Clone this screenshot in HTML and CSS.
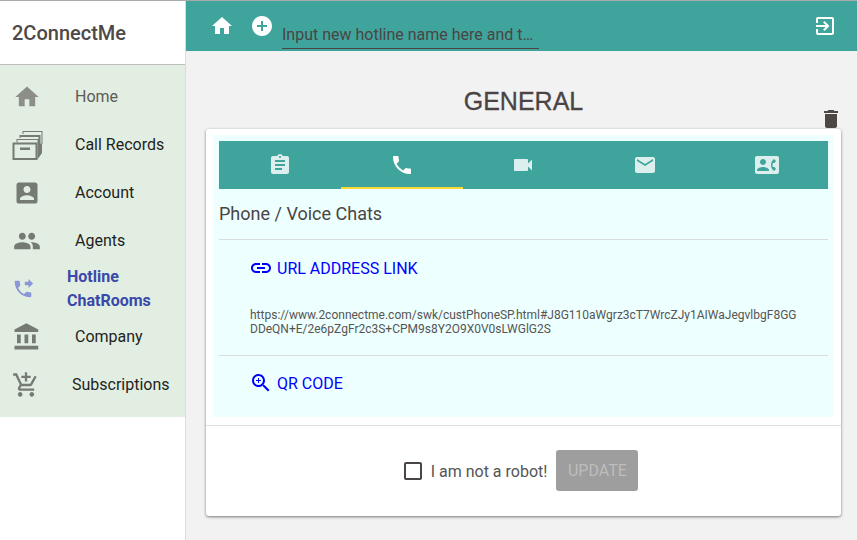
FILE: index.html
```html
<!DOCTYPE html>
<html lang="en">
<head>
<meta charset="utf-8">
<title>2ConnectMe</title>
<link rel="stylesheet" href="styles.css">
</head>
<body>
<div class="app">
  <aside class="sidebar">
    <header class="brand">2ConnectMe</header>
    <nav class="nav">
      <a class="nav-row nav-muted"><svg class="nav-icon" viewBox="0 0 24 24"><path d="M10 20v-6h4v6h5v-8h3L12 3 2 12h3v8z"/></svg><span class="nav-label">Home</span></a>
      <a class="nav-row"><svg class="nav-icon nav-icon-records" viewBox="0 0 32 32"><path d="M2.500 14.500h23V30h-23z" fill="none" stroke-width="2" stroke="currentColor"/><path d="M9 18.500h10v2.500H9z"/><path d="M5.500 13.500V10h22v11h-1V11h-20v2.500zM8.500 9V6h21v11h-2V8h-18v1zM11.500 5V2h20v13l-1 1V3h-18v2zM26.500 15.500l4.500-1V24l-4.500 6.500z"/></svg><span class="nav-label">Call Records</span></a>
      <a class="nav-row"><svg class="nav-icon" viewBox="0 0 24 24"><path d="M3 5v14c0 1.100.89 2 2 2h14c1.100 0 2-.9 2-2V5c0-1.100-.9-2-2-2H5c-1.110 0-2 .9-2 2zm12 4c0 1.660-1.340 3-3 3s-3-1.340-3-3 1.340-3 3-3 3 1.340 3 3zm-9 8c0-2 4-3.100 6-3.100s6 1.100 6 3.100v1H6v-1z"/></svg><span class="nav-label">Account</span></a>
      <a class="nav-row"><svg class="nav-icon" viewBox="0 0 24 24"><path d="M16 11c1.660 0 2.990-1.340 2.990-3S17.660 5 16 5c-1.660 0-3 1.340-3 3s1.340 3 3 3zm-8 0c1.660 0 2.990-1.340 2.990-3S9.660 5 8 5C6.340 5 5 6.340 5 8s1.340 3 3 3zm0 2c-2.330 0-7 1.170-7 3.500V19h14v-2.500c0-2.330-4.670-3.500-7-3.500zm8 0c-.29 0-.62.02-.97.05 1.160.84 1.970 1.970 1.970 3.450V19h6v-2.500c0-2.330-4.670-3.500-7-3.500z"/></svg><span class="nav-label">Agents</span></a>
      <a class="nav-row nav-active"><svg class="nav-icon nav-icon-small" viewBox="0 0 24 24"><path d="M18 11l5-5-5-5v3h-4v4h4v3zm2 4.500c-1.250 0-2.450-.2-3.570-.57-.35-.11-.74-.03-1.020.24l-2.200 2.200c-2.830-1.440-5.150-3.750-6.590-6.590l2.200-2.210c.28-.26.36-.65.25-1C8.700 6.450 8.500 5.250 8.500 4c0-.55-.45-1-1-1H4c-.55 0-1 .45-1 1 0 9.390 7.610 17 17 17 .55 0 1-.45 1-1v-3.500c0-.55-.45-1-1-1z"/></svg><span class="nav-label">Hotline<br>ChatRooms</span></a>
      <a class="nav-row"><svg class="nav-icon nav-icon-large" viewBox="0 0 24 24"><path d="M4 10v7h3v-7H4zm6 0v7h3v-7h-3zM2 22h19v-3H2v3zm14-12v7h3v-7h-3zm-4.500-9L2 6v2h19V6l-9.500-5z"/></svg><span class="nav-label">Company</span></a>
      <a class="nav-row nav-sub"><svg class="nav-icon nav-icon-cart" viewBox="0 0 24 24"><path d="M11 9h2V6h3V4h-3V1h-2v3H8v2h3v3zm-4 9c-1.100 0-1.990.9-1.990 2S5.900 22 7 22s2-.9 2-2-.9-2-2-2zm10 0c-1.100 0-1.990.9-1.990 2s.89 2 1.990 2 2-.9 2-2-.9-2-2-2zm-9.830-3.250l.03-.12.9-1.630h7.450c.75 0 1.410-.41 1.750-1.030l3.860-7.010L19.420 4h-.01l-1.100 2-2.760 5H8.530l-.13-.27L6.160 6l-.95-2-.94-2H1v2h2l3.600 7.590-1.350 2.450c-.16.28-.25.61-.25.96 0 1.100.9 2 2 2h12v-2H7.420c-.13 0-.25-.11-.25-.25z"/></svg><span class="nav-label">Subscriptions</span></a>
    </nav>
  </aside>
  <div class="main">
    <div class="topbar">
      <svg class="bar-icon" viewBox="0 0 24 24"><path d="M10 20v-6h4v6h5v-8h3L12 3 2 12h3v8z"/></svg>
      <svg class="bar-icon bar-add" viewBox="0 0 24 24"><path d="M12 2C6.480 2 2 6.480 2 12s4.480 10 10 10 10-4.480 10-10S17.520 2 12 2zm5 11h-4v4h-2v-4H7v-2h4V7h2v4h4v2z"/></svg>
      <input class="hotline-input" type="text" placeholder="Input new hotline name here and type enter">
      <svg class="bar-icon bar-exit" viewBox="0 0 24 24"><path d="M10.090 15.590L11.500 17l5-5-5-5-1.410 1.410L12.670 11H3v2h9.670l-2.580 2.590zM19 3H5c-1.110 0-2 .9-2 2v4h2V5h14v14H5v-4H3v4c0 1.100.89 2 2 2h14c1.100 0 2-.9 2-2V5c0-1.100-.9-2-2-2z"/></svg>
    </div>
    <div class="content">
      <h1 class="title">GENERAL</h1>
      <section class="card">
        <svg class="trash" viewBox="0 0 24 24"><path d="M6 19c0 1.100.9 2 2 2h8c1.100 0 2-.9 2-2V7H6v12zM19 4h-3.500l-1-1h-5l-1 1H5v2h14V4z"/></svg>
        <div class="panel">
          <div class="tabs">
            <div class="tab"><svg viewBox="0 0 24 24"><path d="M19 3h-4.180C14.400 1.840 13.300 1 12 1c-1.300 0-2.400.84-2.820 2H5c-1.100 0-2 .9-2 2v14c0 1.100.9 2 2 2h14c1.100 0 2-.9 2-2V5c0-1.100-.9-2-2-2zm-7 0c.55 0 1 .45 1 1s-.45 1-1 1-1-.45-1-1 .45-1 1-1zm2 14H7v-2h7v2zm3-4H7v-2h10v2zm0-4H7V7h10v2z"/></svg></div>
            <div class="tab tab-active"><svg viewBox="0 0 24 24"><path d="M6.620 10.790c1.440 2.830 3.760 5.140 6.590 6.590l2.200-2.200c.27-.27.67-.36 1.020-.24 1.120.37 2.330.57 3.570.57.55 0 1 .45 1 1V20c0 .55-.45 1-1 1-9.390 0-17-7.610-17-17 0-.55.45-1 1-1h3.500c.55 0 1 .45 1 1 0 1.250.2 2.450.57 3.570.11.35.03.74-.25 1.020l-2.200 2.200z"/></svg></div>
            <div class="tab"><svg viewBox="0 0 24 24"><path d="M17 10.500V7c0-.55-.45-1-1-1H4c-.55 0-1 .45-1 1v10c0 .55.45 1 1 1h12c.55 0 1-.45 1-1v-3.500l4 4v-11l-4 4z"/></svg></div>
            <div class="tab"><svg viewBox="0 0 24 24"><path d="M20 4H4c-1.100 0-1.990.9-1.990 2L2 18c0 1.100.9 2 2 2h16c1.100 0 2-.9 2-2V6c0-1.100-.9-2-2-2zm0 4l-8 5-8-5V6l8 5 8-5v2z"/></svg></div>
            <div class="tab"><svg viewBox="0 0 24 24"><path d="M22 3H2C.9 3 0 3.900 0 5v14c0 1.100.9 2 2 2h20c1.100 0 1.990-.9 1.990-2L24 5c0-1.100-.9-2-2-2zM8 6c1.660 0 3 1.340 3 3s-1.340 3-3 3-3-1.340-3-3 1.340-3 3-3zm6 12H2v-1c0-2 4-3.100 6-3.100s6 1.100 6 3.100v1zm3.850-4h1.640L21 16l-1.990 1.990c-1.310-.98-2.280-2.380-2.730-3.990-.18-.64-.28-1.310-.28-2s.1-1.360.28-2c.45-1.620 1.420-3.010 2.730-3.990L21 8l-1.510 2h-1.640c-.22.63-.35 1.300-.35 2s.13 1.370.35 2z"/></svg></div>
          </div>
          <div class="panel-body">
            <h2 class="section-title">Phone / Voice Chats</h2>
            <div class="block">
              <a class="action"><svg viewBox="0 0 24 24"><path d="M3.900 12c0-1.710 1.390-3.100 3.100-3.100h4V7H7c-2.760 0-5 2.240-5 5s2.240 5 5 5h4v-1.900H7c-1.710 0-3.100-1.390-3.100-3.100zM8 13h8v-2H8v2zm9-6h-4v1.900h4c1.710 0 3.100 1.390 3.100 3.100s-1.390 3.100-3.100 3.100h-4V17h4c2.760 0 5-2.240 5-5s-2.240-5-5-5z"/></svg>URL ADDRESS LINK</a>
              <p class="url">https://www.2connectme.com/swk/custPhoneSP.html#J8G110aWgrz3cT7WrcZJy1AIWaJegvlbgF8GG<br>DDeQN+E/2e6pZgFr2c3S+CPM9s8Y2O9X0V0sLWGlG2S</p>
            </div>
            <div class="block block-qr">
              <a class="action"><svg viewBox="0 0 24 24"><path d="M15.500 14h-.79l-.28-.27C15.410 12.590 16 11.110 16 9.500 16 5.910 13.090 3 9.500 3S3 5.910 3 9.500 5.910 16 9.500 16c1.610 0 3.090-.59 4.230-1.570l.27.28v.79l5 4.990L20.490 19l-4.990-5zm-6 0C7.010 14 5 11.990 5 9.500S7.010 5 9.500 5 14 7.010 14 9.500 11.990 14 9.500 14zm2.500-4h-2v2H9v-2H7V9h2V7h1v2h2v1z"/></svg>QR CODE</a>
            </div>
          </div>
        </div>
        <footer class="card-footer">
          <span class="checkbox"></span>
          <span class="check-label">I am not a robot!</span>
          <button class="update" type="button">UPDATE</button>
        </footer>
      </section>
    </div>
  </div>
</div>
</body>
</html>
```

FILE: styles.css
```css
* { box-sizing: border-box; }
html, body { margin: 0; padding: 0; height: 100%; overflow: hidden; }
body { font-family: Roboto, "Liberation Sans", sans-serif; color: #4a4444; background: #fff; }
.app { display: flex; height: 540px; border-top: 1px solid #aaa; }

.sidebar { width: 186px; flex: none; background: #fff; border-right: 1px solid #dcdcdc; }
.brand { height: 64px; display: flex; align-items: center; padding-left: 12px; padding-top: 1px; font-size: 20px; font-weight: 500; color: #4f4848; border-bottom: 1px solid #bdbdbd; }
.nav { background: #e2eee1; padding: 8px 0; }
.nav-row { display: flex; align-items: center; height: 48px; color: #1f1f1f; font-size: 16px; line-height: 24px; position: relative; padding-left: 75px; }
.nav-icon { position: absolute; left: 13px; top: 10px; width: 28px; height: 28px; fill: #757b73; color: #757b73; }
.nav-icon-records { width: 32px; height: 32px; left: 11px; top: 8px; }
.nav-icon-small { width: 22px; height: 22px; left: 12px; top: 13px; fill: #8a97d6; }
.nav-icon-large { width: 30px; height: 30px; left: 12px; top: 9px; }
.nav-icon-cart { left: 12px; }
.nav-muted { color: #5e5a58; }
.nav-muted .nav-icon { fill: #8e8e89; }
.nav-active { color: #3949ab; font-weight: 700; padding-left: 67px; }
.nav-sub { padding-left: 72px; }

.main { flex: 1; min-width: 0; background: #f2f2f2; }
.topbar { height: 50px; background: #3fa59c; display: flex; align-items: flex-start; padding-left: 24px; }
.bar-icon { width: 24px; height: 24px; fill: #fff; flex: none; margin-top: 13px; }
.bar-add { margin-left: 16px; }
.bar-exit { margin-left: auto; margin-right: 20px; }
.hotline-input { width: 257px; height: 32px; margin: 16px 0 0 8px; padding: 4px 5px 0 0; background: transparent; border: 0; border-bottom: 1px solid #4a4444; outline: 0; font: 16px Roboto, sans-serif; color: #4a4444; text-overflow: ellipsis; }
.hotline-input::placeholder { color: #4a4444; opacity: 1; }

.content { padding: 0 16px 0 20px; }
.title { margin: 0; height: 78px; padding-top: 35px; text-align: center; font: 400 25px/30px "Liberation Sans", Arial, sans-serif; color: #4a4444; -webkit-text-stroke: .3px #4a4444; }
.card { position: relative; height: 387px; background: #fff; border-radius: 3px; box-shadow: 0 1px 3px rgba(0,0,0,.5); padding: 6px 7px 0; }
.trash { position: absolute; right: -2px; top: -22px; width: 24px; height: 24px; fill: #4f4646; }
.panel { background: #edfffe; height: 282px; padding: 6px 6px 0; }
.tabs { display: grid; grid-template-columns: repeat(5, 1fr); height: 48px; background: #3fa59c; }
.tab { display: flex; align-items: center; justify-content: center; }
.tab svg { width: 24px; height: 24px; fill: #fff; opacity: .82; }
.tab-active { border-bottom: 2.500px solid #fdd835; padding-top: 2.500px; }
.tab-active svg { opacity: 1; }
.panel-body { width: 609px; }
.section-title { margin: 0; height: 51px; display: flex; align-items: center; padding-bottom: 1px; font-size: 18px; font-weight: 400; color: #4a4444; border-bottom: 1px solid #dcdcdc; }
.block { height: 116px; border-bottom: 1px solid #dcdcdc; padding: 16px 0 0 30px; }
.block-qr { border-bottom: 0; padding-top: 15px; }
.action { display: flex; align-items: center; gap: 4px; height: 24px; font-size: 16px; color: #0000ff; }
.action svg { width: 24px; height: 24px; fill: #0000ff; flex: none; }
.url { margin: 28px 0 0 1px; font-size: 12px; line-height: 14px; color: #555; white-space: nowrap; }
.card-footer { height: 91px; margin: 8px -7px 0; border-top: 1px solid #e0e0e0; display: flex; align-items: center; justify-content: center; padding: 0 5px 2px 0; }
.checkbox { width: 18px; height: 18px; margin-top: 2px; border: 2px solid #4a4444; border-radius: 2px; }
.check-label { margin: 2px 9px 0; font-size: 16px; color: #555; }
.update { width: 82px; height: 41px; border: 0; border-radius: 3px; background: #9e9e9e; color: #bdbdbd; font: 16px Roboto, sans-serif; padding: 0; }
```
